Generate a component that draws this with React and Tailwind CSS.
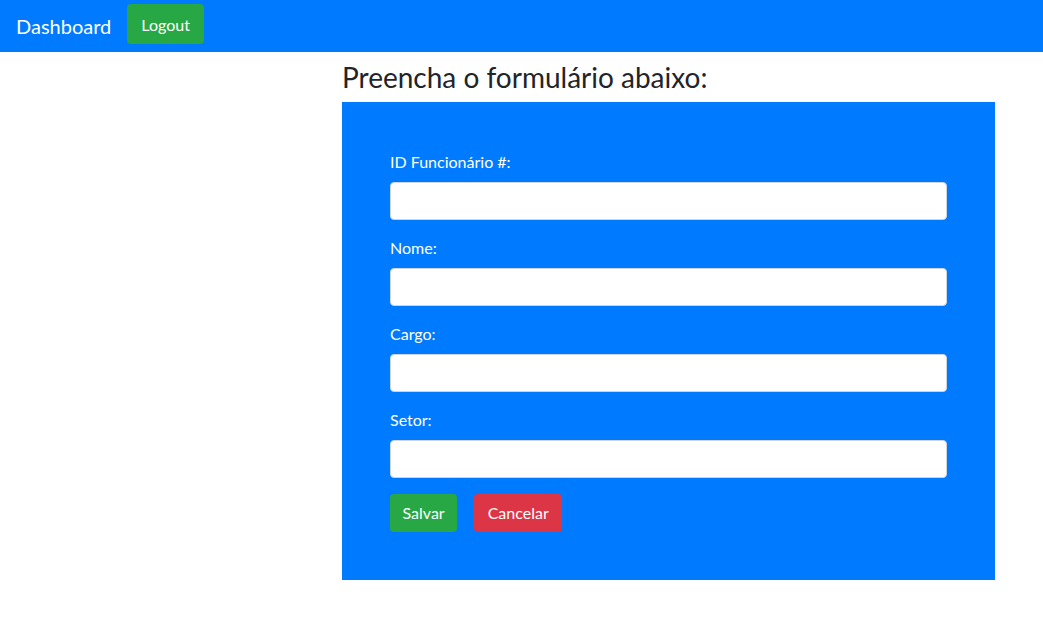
export default function App() {
  const fields = ['ID Funcionário #:', 'Nome:', 'Cargo:', 'Setor:']

  return (
    <div className="min-h-[618px] bg-white text-[#212529]" style={{ fontFamily: '"Segoe UI", Lato, "Noto Sans", sans-serif' }}>
      <nav className="flex h-[52px] items-start bg-[#007bff] px-4">
        <span className="mr-4 mt-[11px] text-[20px] leading-[30px] text-white">Dashboard</span>
        <button className="mt-[4px] h-[40px] rounded bg-[#28a745] px-[14px] pt-[2px] text-[16px] text-white">Logout</button>
      </nav>

      <div className="ml-[342px] mr-[48px]">
        <h3 className="mt-[8px] mb-[8px] text-[28px] leading-[34px]">Preencha o formulário abaixo:</h3>
        <form className="bg-[#007bff] p-12">
          {fields.map((f) => (
            <div key={f} className="mb-4">
              <label className="mb-2 block text-[16px] leading-6 text-white">{f}</label>
              <input className="block h-[38px] w-full rounded border border-[#ced4da] bg-white px-3" />
            </div>
          ))}
          <div className="flex gap-[17px]">
            <button type="button" className="h-[38px] rounded bg-[#28a745] px-[12.5px] text-[16px] text-white">Salvar</button>
            <button type="button" className="h-[38px] rounded bg-[#dc3545] px-[13.5px] text-[16px] text-white">Cancelar</button>
          </div>
        </form>
      </div>
    </div>
  )
}
